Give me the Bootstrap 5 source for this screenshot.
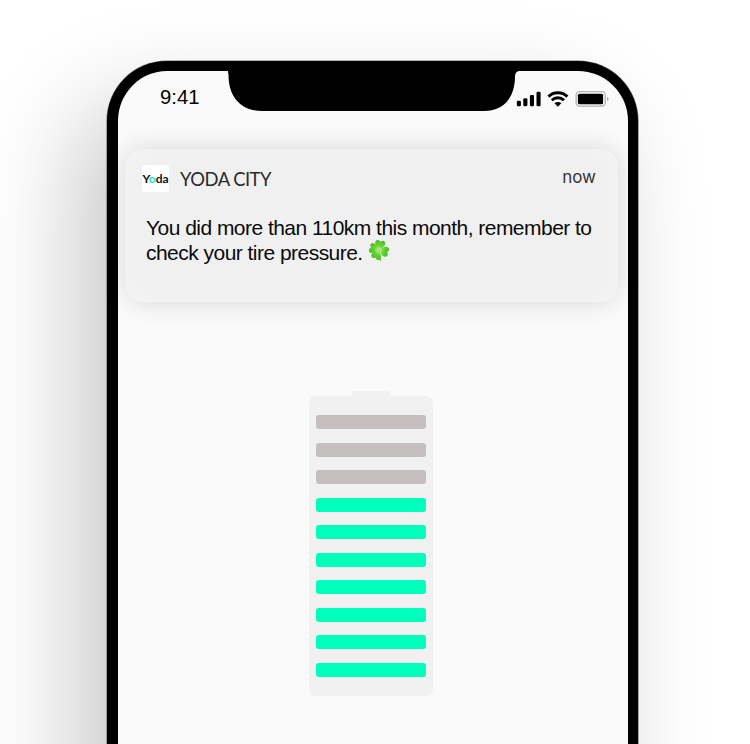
<!DOCTYPE html>
<html lang="en">
<head>
<meta charset="utf-8">
<meta name="viewport" content="width=device-width, initial-scale=1">
<title>Yoda City</title>
<link href="https://cdn.jsdelivr.net/npm/bootstrap@5.3.0/dist/css/bootstrap.min.css" rel="stylesheet">
<style>
body{font-family:"Liberation Sans",Arial,sans-serif;background:#fff;height:744px}
.stage{height:744px;padding:60.5px 0 0 107px}
.phone{width:531px;height:1000px;border:solid #000;border-width:10px 10px 0 11px;border-radius:60px 60px 0 0;background:#fafafa;box-shadow:0 0 0 .6px #6f7674,-30px 44px 100px rgba(0,0,0,.22)}
.status{height:78.5px}
.clock{width:110px;padding:14.5px 0 0 42px;font-size:20.3px;line-height:24px;color:#000}
.notch{width:290px;height:42px;margin-top:-1px}
.signals{margin:19.5px 0 0 -2px}
.notice{width:493px;height:153px;margin-left:7px;border-radius:18px;background:#f0f0f0;box-shadow:0 0 26px rgba(0,0,0,.14),inset 0 0 26px rgba(255,255,255,.35);padding:16px 22px 0 17px}
.logo{width:27px;height:27px;border-radius:3px;background:#fff;font:700 12px/28px "Lato",sans-serif;color:#111}
.logo span{color:#1fe6b0}
.brand{font:400 18.4px/28px "Lato",sans-serif;color:#2b2b2b;margin-left:11px;letter-spacing:-.5px}
.when{font:400 17px/25px "Inter",sans-serif;color:#333}
.message{font-size:21px;line-height:25px;color:#0a0a0a;padding:22px 0 0 4px;letter-spacing:-.53px}
.clover{vertical-align:-1px;margin-left:1px}
.cap{width:38.5px;height:5px;border-radius:3px 3px 0 0;background:#f1f1f1}
.gauge{margin:89px 0 0 191px;width:124px}
.cells{height:300px;border-radius:7px;background:#f1f1f1;padding:19px 7px;gap:13.55px}
.cell{height:14px;flex:none;border-radius:3px;background:#00ffbb}
.cell.spent{background:#c4bfbe}
</style>
<script src="https://cdn.jsdelivr.net/npm/bootstrap@5.3.0/dist/js/bootstrap.bundle.min.js"></script>
</head>
<body class="overflow-hidden">
<main class="stage overflow-hidden">
<div class="phone">
  <header class="status d-flex align-items-start">
    <div class="clock flex-shrink-0">9:41</div>
    <svg class="notch flex-shrink-0" viewBox="0 0 290 42"><path d="M-3 0H290V1.500Q287.500 1.500 287 6C287 25 278 41 256 41H34C14 41 .5 28 .5 5Q.5 1 -3 1Z"/></svg>
    <svg class="signals flex-shrink-0" width="94" height="18" viewBox="0 0 94 18">
      <rect x=".8" y="10.700" width="4.100" height="5.600" rx="1.200"/><rect x="7.300" y="8.300" width="4.100" height="8" rx="1.200"/><rect x="13.900" y="5" width="4.100" height="11.300" rx="1.200"/><rect x="20.500" y="1.800" width="4.100" height="14.500" rx="1.200"/>
      <g fill="none" stroke="#000" stroke-width="2.900"><path d="M32.400 6.600a13.600 13.600 0 0 1 19 0"/><path d="M35.800 10.300a8.700 8.700 0 0 1 12.200 0"/></g>
      <path d="M38.500 13.300a4.900 4.900 0 0 1 6.800 0L41.900 16.700Z"/>
      <rect x="60.100" y="1.600" width="29.200" height="14.500" rx="3.600" fill="none" stroke="#b0b0b0" stroke-width="1.300"/>
      <rect x="61.900" y="3.700" width="25.200" height="10.600" rx="1.600"/>
      <path d="M91 6.700q1.600.8 1.600 2.200t-1.600 2.200z" fill="#aaa"/>
    </svg>
  </header>
  <section class="notice">
    <div class="d-flex">
      <div class="logo text-center text-nowrap">Y<span>o</span>da</div>
      <div class="brand">YODA CITY</div>
      <div class="when ms-auto">now</div>
    </div>
    <div class="message text-nowrap">You did more than 110km this month, remember to<br>check your tire pressure.
      <svg class="clover" width="20" height="21" viewBox="0 0 20 21">
        <defs><radialGradient id="leaf" cx="50%" cy="90%" r="95%"><stop offset="0" stop-color="#b4ec7c"/><stop offset=".4" stop-color="#68d334"/><stop offset="1" stop-color="#4bbb26"/></radialGradient>
        <path id="heart" d="M10 9.800C8.400 8.300 4.900 5.800 4.900 3C4.900 .3 8.300 -.9 10 1.900C11.700 -.9 15.100 .3 15.100 3C15.100 5.800 11.600 8.300 10 9.800Z" fill="url(#leaf)"/></defs>
        <path d="M10 10Q10.200 16 11.600 20.300" fill="none" stroke="#7cc84e" stroke-width="1.400" stroke-linecap="round"/>
        <g><use href="#heart" transform="rotate(10 10 10)"/><use href="#heart" transform="rotate(105 10 10)"/><use href="#heart" transform="rotate(204 10 10)"/><use href="#heart" transform="rotate(286 10 10)"/></g>
      </svg>
    </div>
  </section>
  <section class="gauge">
    <div class="cap mx-auto"></div>
    <div class="cells d-flex flex-column">
      <div class="cell spent"></div><div class="cell spent"></div><div class="cell spent"></div>
      <div class="cell"></div><div class="cell"></div><div class="cell"></div><div class="cell"></div><div class="cell"></div><div class="cell"></div><div class="cell"></div>
    </div>
  </section>
</div>
</main>
</body>
</html>
